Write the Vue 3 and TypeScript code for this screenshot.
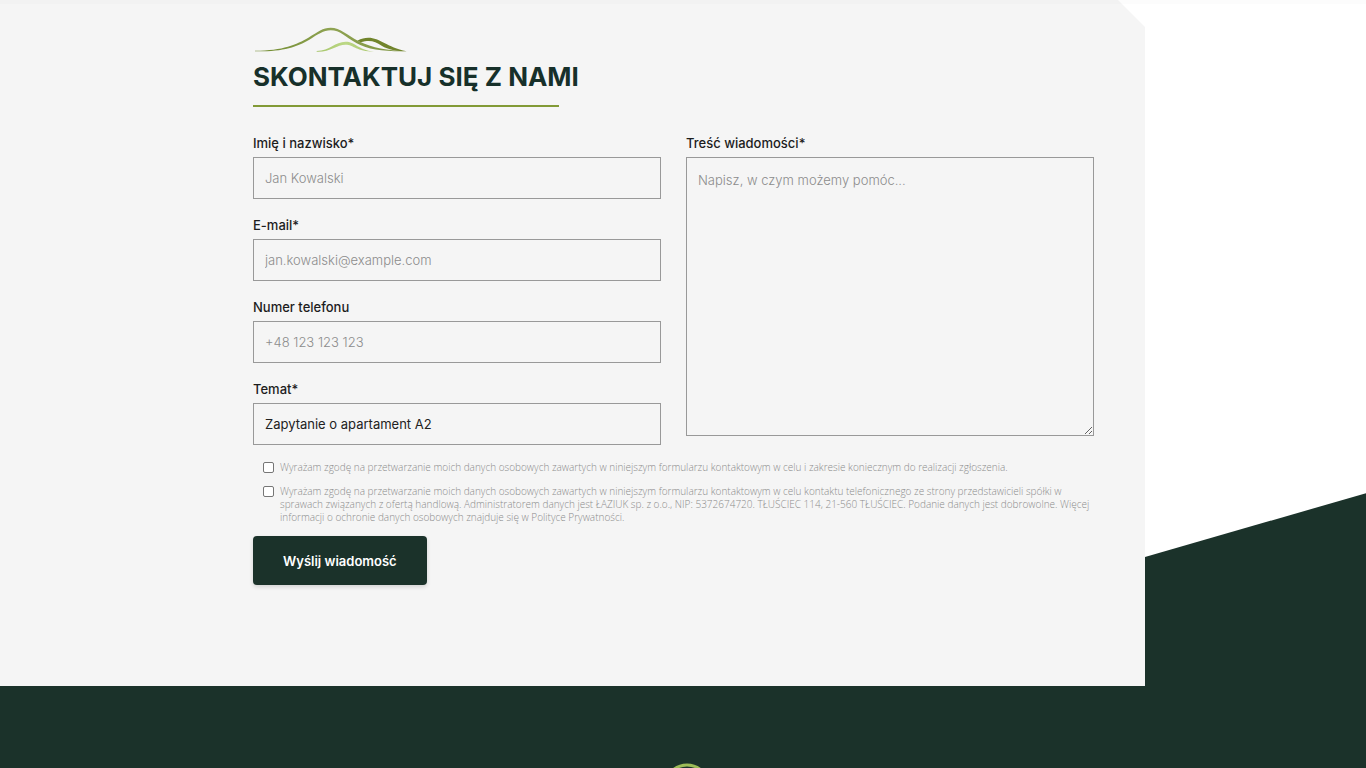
<script setup lang="ts">
import { reactive } from 'vue'

interface Field {
  id: 'name' | 'email' | 'phone' | 'subject'
  label: string
  type: string
  placeholder: string
}

const fields: Field[] = [
  { id: 'name', label: 'Imię i nazwisko*', type: 'text', placeholder: 'Jan Kowalski' },
  { id: 'email', label: 'E-mail*', type: 'email', placeholder: 'jan.kowalski@example.com' },
  { id: 'phone', label: 'Numer telefonu', type: 'tel', placeholder: '+48 123 123 123' },
  { id: 'subject', label: 'Temat*', type: 'text', placeholder: '' },
]

const form = reactive({
  name: '',
  email: '',
  phone: '',
  subject: 'Zapytanie o apartament A2',
  message: '',
  consents: [false, false],
})

const consents: string[] = [
  'Wyrażam zgodę na przetwarzanie moich danych osobowych zawartych w niniejszym formularzu kontaktowym w celu i zakresie koniecznym do realizacji zgłoszenia.',
  'Wyrażam zgodę na przetwarzanie moich danych osobowych zawartych w niniejszym formularzu kontaktowym w celu kontaktu telefonicznego ze strony przedstawicieli spółki w sprawach związanych z ofertą handlową. Administratorem danych jest ŁAZIUK sp. z o.o., NIP: 5372674720. TŁUŚCIEC 114, 21-560 TŁUŚCIEC. Podanie danych jest dobrowolne. Więcej informacji o ochronie danych osobowych znajduje się w Polityce Prywatności.',
]
</script>

<template>
  <div class="page">
    <main class="contact">
      <section class="panel">
        <div class="content">
          <svg class="hills" viewBox="39 36 462 78" aria-hidden="true">
            <defs>
              <linearGradient id="ridge" x1="0" x2="1">
                <stop offset="0" stop-color="#6f8a2e" />
                <stop offset="0.5" stop-color="#8fa352" />
                <stop offset="1" stop-color="#7d9440" />
              </linearGradient>
              <linearGradient id="front" x1="0" x2="1">
                <stop offset="0" stop-color="#a5c468" />
                <stop offset="0.5" stop-color="#bcd886" />
                <stop offset="1" stop-color="#a9c66c" />
              </linearGradient>
            </defs>
            <path fill="#71842c" d="M352 77C365 70 373 68 385 68C420 68 440 96 500 109C470 109 445 104 425 92C405 79 390 73 362 82Z" />
            <path fill="url(#ridge)" d="M45 107C130 107 170 88 205 68C235 50 248 38 272 38C300 38 325 62 355 78C400 100 440 106 500 109C430 110 385 104 350 85C315 65 300 46 272 46C250 46 235 58 208 74C170 96 130 110 45 109Z" />
            <path fill="url(#front)" d="M230 108C270 107 285 80 317 80C345 80 352 103 402 110C350 109 340 89 317 89C290 89 270 112 230 110Z" />
          </svg>
          <h1>SKONTAKTUJ SIĘ Z NAMI</h1>
          <form @submit.prevent>
            <div class="columns">
              <div class="fields">
                <div v-for="field in fields" :key="field.id" class="field">
                  <label :for="field.id">{{ field.label }}</label>
                  <input :id="field.id" v-model="form[field.id]" :type="field.type" :placeholder="field.placeholder" />
                </div>
              </div>
              <div class="field">
                <label for="message">Treść wiadomości*</label>
                <textarea id="message" v-model="form.message" placeholder="Napisz, w czym możemy pomóc..."></textarea>
              </div>
            </div>
            <div class="consents">
              <div v-for="(text, i) in consents" :key="i" class="consent">
                <input :id="`consent-${i}`" v-model="form.consents[i]" type="checkbox" />
                <label :for="`consent-${i}`">{{ text }}</label>
              </div>
            </div>
            <button type="submit">Wyślij wiadomość</button>
          </form>
        </div>
      </section>
      <div class="slope"></div>
    </main>
    <footer>
      <svg class="emblem" viewBox="0 0 48 48" aria-hidden="true">
        <circle cx="24" cy="24" r="22" fill="none" stroke="#9dbb58" stroke-width="3" />
      </svg>
    </footer>
  </div>
</template>

<style>
body {
  margin: 0;
}
</style>

<style scoped>
* {
  box-sizing: border-box;
}

.page {
  display: flex;
  flex-direction: column;
  height: 100vh;
  overflow: hidden;
  background: #fff;
  color: #1d1d1d;
  font-family: Inter, "Open Sans", sans-serif;
}

.contact {
  display: grid;
  grid-template-columns: 1145fr 221fr;
  flex: none;
  background: linear-gradient(#fcfcfc 4px, #fff 4px);
}

.panel {
  display: grid;
  grid-template-columns: 253fr 841fr 51fr;
  padding: 27px 0 101px;
  background: linear-gradient(#f2f2f2 4px, #f5f5f5 4px);
  clip-path: polygon(0 0, calc(100% - 27px) 0, 100% 27px, 100% 100%, 0 100%);
}

.content {
  grid-column: 2;
}

.slope {
  background: #1b322a;
  clip-path: polygon(0 81.2%, 100% 71.9%, 100% 100%, 0 100%);
}

.hills {
  display: block;
  width: 154px;
  height: 26px;
}

h1 {
  margin: 9px 0 0;
  color: #17302a;
  font-size: 26px;
  font-weight: 700;
  line-height: 30px;
}

h1::after {
  display: block;
  width: 306px;
  height: 2px;
  margin-top: 13px;
  background: #829a36;
  content: "";
}

form {
  margin-top: 26px;
}

.columns {
  display: grid;
  grid-template-columns: 1fr 1fr;
  gap: 25px;
}

.fields {
  display: grid;
  gap: 16px;
}

.field {
  display: flex;
  flex-direction: column;
  gap: 4px;
}

.field label {
  font-size: 13px;
  font-weight: 500;
  line-height: 20px;
}

.field input,
.field textarea {
  width: 100%;
  margin: 0;
  border: 1px solid #999;
  border-radius: 0;
  background: transparent;
  color: #222;
  font: 400 13px/20px Inter, "Open Sans", sans-serif;
}

.field input {
  height: 42px;
  padding: 0 11px;
}

.field textarea {
  height: 279px;
  padding: 12px 11px;
  resize: both;
}

.field input::placeholder,
.field textarea::placeholder {
  color: #8c8c8c;
  font-weight: 300;
  opacity: 1;
}

.consents {
  display: grid;
  gap: 11px;
  margin-top: 16px;
  padding-left: 10px;
}

.consent {
  display: flex;
  align-items: flex-start;
  gap: 6px;
}

.consent input {
  flex: none;
  width: 11px;
  height: 11px;
  margin: 1px 0 0;
  border: 1px solid #767676;
  border-radius: 2px;
  background: #fff;
  appearance: none;
}

.consent input:checked {
  background: #1b322a;
}

.consent label {
  color: #8c8c8c;
  font-family: "Open Sans", sans-serif;
  font-size: 10px;
  font-weight: 300;
  line-height: 13px;
}

button {
  height: 49px;
  margin-top: 12px;
  padding: 0 30px;
  border: 0;
  border-radius: 4px;
  background: #1b322a;
  box-shadow: 0 2px 4px rgb(0 0 0 / 14%);
  color: #fff;
  font: 600 13px/20px Inter, "Open Sans", sans-serif;
}

footer {
  display: flex;
  flex: 1;
  justify-content: center;
  padding: 77px 0 0 8px;
  overflow: hidden;
  background: #1b322a;
}

.emblem {
  flex: none;
  width: 48px;
  height: 48px;
}
</style>
